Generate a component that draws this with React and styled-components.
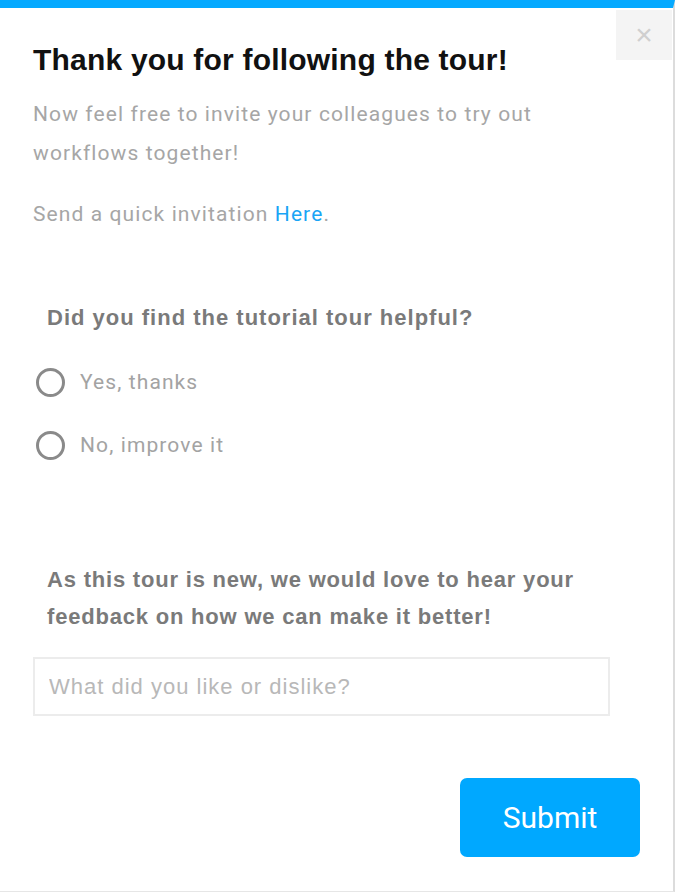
import React, { useState } from "react";
import styled, { createGlobalStyle } from "styled-components";

const GlobalStyle = createGlobalStyle`
  html, body {
    margin: 0;
    padding: 0;
    background: #ffffff;
  }
`;

function App() {
  const [answer, setAnswer] = useState("");
  const [feedback, setFeedback] = useState("");

  return (
    <>
      <GlobalStyle />
      <Modal>
        <CloseButton type="button" aria-label="Close">
          ×
        </CloseButton>
        <Content>
          <Title>Thank you for following the tour!</Title>
          <Text>Now feel free to invite your colleagues to try out workflows together!</Text>
          <Text $gap>
            Send a quick invitation <Link href="#">Here</Link>.
          </Text>

          <Question>Did you find the tutorial tour helpful?</Question>
          <Options>
            <Option>
              <Radio
                type="radio"
                name="helpful"
                checked={answer === "yes"}
                onChange={() => setAnswer("yes")}
              />
              Yes, thanks
            </Option>
            <Option>
              <Radio
                type="radio"
                name="helpful"
                checked={answer === "no"}
                onChange={() => setAnswer("no")}
              />
              No, improve it
            </Option>
          </Options>

          <FeedbackLabel>
            As this tour is new, we would love to hear your feedback on how we can make it better!
          </FeedbackLabel>
          <FeedbackInput
            type="text"
            value={feedback}
            onChange={(e) => setFeedback(e.target.value)}
            placeholder="What did you like or dislike?"
          />
          <Footer>
            <SubmitButton type="button">Submit</SubmitButton>
          </Footer>
        </Content>
      </Modal>
    </>
  );
}

export default App;

const Modal = styled.div`
  position: relative;
  box-sizing: border-box;
  width: 675px;
  height: 892px;
  background: #ffffff;
  border-top: 8px solid #05a9ff;
  border-right: 2px solid #dcdcdc;
  border-bottom: 1px solid #e6e6e6;
`;

const CloseButton = styled.button`
  position: absolute;
  top: 2px;
  right: 1px;
  width: 56px;
  height: 50px;
  border: 0;
  padding: 0;
  background: #f4f4f4;
  color: #cfcfcf;
  font-family: "Liberation Sans", Arial, sans-serif;
  font-size: 30px;
  font-weight: 300;
  line-height: 1;
  cursor: pointer;
`;

const Content = styled.div`
  display: flex;
  flex-direction: column;
  padding: 35px 33px 0 33px;
`;

const Title = styled.h1`
  margin: 0;
  font-family: "Liberation Sans", Arial, sans-serif;
  font-size: 30px;
  line-height: 34px;
  font-weight: 700;
  letter-spacing: 0.2px;
  color: #111111;
`;

const Text = styled.p`
  margin: ${(p) => (p.$gap ? "22px 0 0" : "18px 0 0")};
  width: 540px;
  font-family: Roboto, "Open Sans", sans-serif;
  font-size: 21px;
  line-height: 39px;
  letter-spacing: 1.1px;
  color: #a6a6a6;
`;

const Link = styled.a`
  color: #1aa5f5;
  text-decoration: none;
`;

const Question = styled.h3`
  margin: 69px 0 0 14px;
  font-family: "Liberation Sans", Arial, sans-serif;
  font-size: 22px;
  line-height: 30px;
  font-weight: 700;
  letter-spacing: 1px;
  color: #7a7a7a;
`;

const Options = styled.div`
  display: flex;
  flex-direction: column;
  gap: 33px;
  margin-top: 34px;
`;

const Option = styled.label`
  display: flex;
  align-items: center;
  gap: 15px;
  height: 30px;
  padding-left: 3px;
  font-family: Roboto, "Open Sans", sans-serif;
  font-size: 21px;
  letter-spacing: 1.1px;
  color: #a3a3a3;
  cursor: pointer;
`;

const Radio = styled.input`
  appearance: none;
  box-sizing: border-box;
  margin: 0;
  width: 29px;
  height: 29px;
  border: 3px solid #8a8a8a;
  border-radius: 50%;
  background: #ffffff;
  cursor: pointer;

  &:checked {
    background: radial-gradient(circle, #05a9ff 0 6px, #ffffff 7px);
  }
`;

const FeedbackLabel = styled.h3`
  margin: 101px 0 0 14px;
  width: 545px;
  font-family: "Liberation Sans", Arial, sans-serif;
  font-size: 22px;
  line-height: 37px;
  font-weight: 700;
  letter-spacing: 0.8px;
  color: #7a7a7a;
`;

const FeedbackInput = styled.input`
  box-sizing: border-box;
  margin-top: 22px;
  width: 577px;
  height: 59px;
  padding: 0 14px;
  border: 2px solid #ececec;
  border-radius: 0;
  outline: none;
  font-family: "Liberation Sans", Arial, sans-serif;
  font-size: 22px;
  letter-spacing: 1px;
  color: #555555;

  &::placeholder {
    color: #b8b8b8;
  }
`;

const Footer = styled.div`
  display: flex;
  justify-content: flex-end;
  margin-top: 62px;
`;

const SubmitButton = styled.button`
  width: 180px;
  height: 79px;
  border: 0;
  border-radius: 7px;
  background: #00a8ff;
  color: #ffffff;
  font-family: Roboto, "Open Sans", sans-serif;
  font-size: 30px;
  font-weight: 400;
  cursor: pointer;
`;
